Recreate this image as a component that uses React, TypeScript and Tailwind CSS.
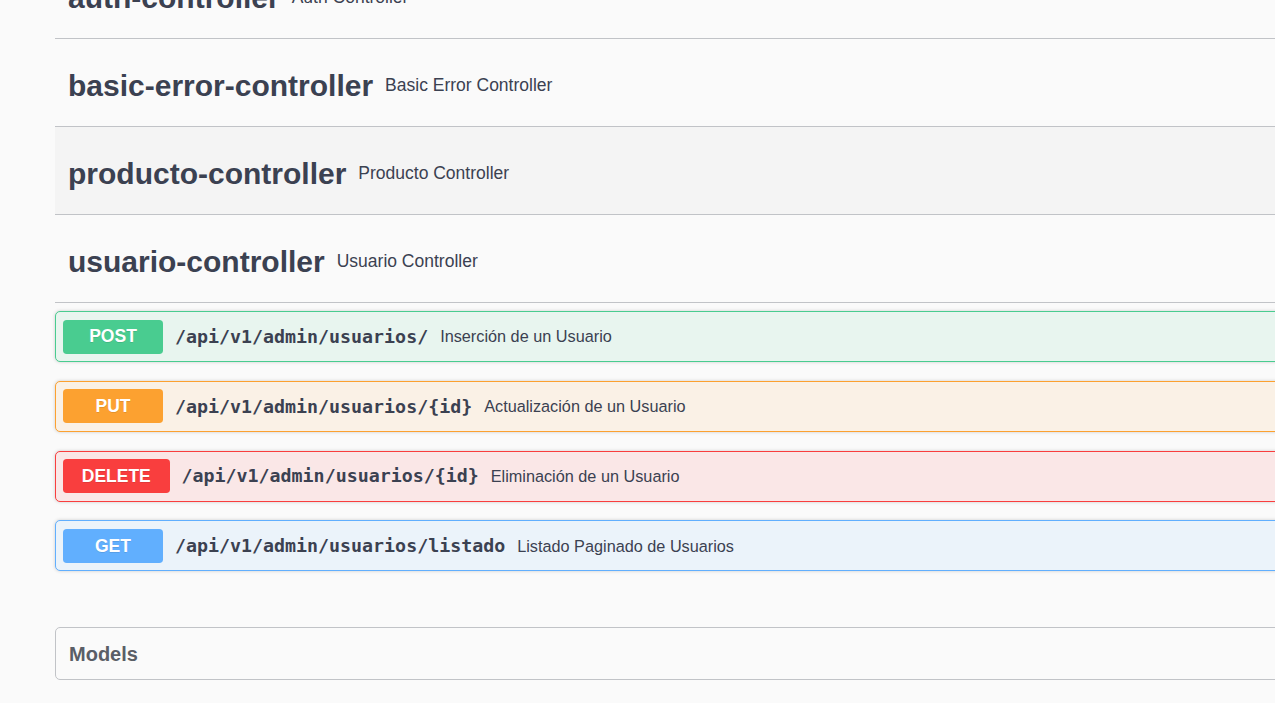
const tags = [
  { name: "auth-controller", desc: "Auth Controller", hover: false },
  { name: "basic-error-controller", desc: "Basic Error Controller", hover: false },
  { name: "producto-controller", desc: "Producto Controller", hover: true },
  { name: "usuario-controller", desc: "Usuario Controller", hover: false },
];

type Op = {
  method: string;
  path: string;
  summary: string;
  box: string;
  badge: string;
};

const ops: Op[] = [
  {
    method: "POST",
    path: "/api/v1/admin/usuarios/",
    summary: "Inserción de un Usuario",
    box: "border-[#49cc90] bg-[#e8f5ef]",
    badge: "bg-[#49cc90]",
  },
  {
    method: "PUT",
    path: "/api/v1/admin/usuarios/{id}",
    summary: "Actualización de un Usuario",
    box: "border-[#fca130] bg-[#faf1e6]",
    badge: "bg-[#fca130]",
  },
  {
    method: "DELETE",
    path: "/api/v1/admin/usuarios/{id}",
    summary: "Eliminación de un Usuario",
    box: "border-[#f93e3e] bg-[#fae7e7]",
    badge: "bg-[#f93e3e]",
  },
  {
    method: "GET",
    path: "/api/v1/admin/usuarios/listado",
    summary: "Listado Paginado de Usuarios",
    box: "border-[#61affe] bg-[#ebf3fa]",
    badge: "bg-[#61affe]",
  },
];

function TagHeader({ name, desc, hover }: { name: string; desc: string; hover: boolean }) {
  return (
    <h3
      className={`flex items-center h-[88px] pl-[13px] pt-[7px] border-b border-[#c1c3c7] text-[#3b4151] ${
        hover ? "bg-[#f4f4f4]" : ""
      }`}
    >
      <span className="text-[30px] font-bold leading-none">{name}</span>
      <small className="ml-[12px] text-[17.5px] font-normal leading-none">{desc}</small>
    </h3>
  );
}

function OpBlock({ op }: { op: Op }) {
  return (
    <div
      className={`mb-[18.75px] border rounded-[5px] shadow-[0_0_3.75px_rgba(0,0,0,0.19)] ${op.box}`}
    >
      <div className="flex items-center h-[49px] px-[7px]">
        <span
          className={`flex items-center justify-center h-[34px] min-w-[100px] px-[18.75px] rounded-[3.75px] text-white text-[17.5px] font-bold [text-shadow:0_1px_0_rgba(0,0,0,0.1)] ${op.badge}`}
        >
          {op.method}
        </span>
        <span className="px-[12px] text-[18.3px] font-bold text-[#3b4151] font-['DejaVu_Sans_Mono',monospace]">
          {op.path}
        </span>
        <span className="text-[16.25px] text-[#3b4151]">{op.summary}</span>
      </div>
    </div>
  );
}

export default function App() {
  return (
    <div className="w-full h-[703px] overflow-hidden bg-[#fafafa] font-['Liberation_Sans',Arial,sans-serif]">
      <div className="ml-[55px] w-[1300px] -mt-[49px]">
        {tags.map((t) => (
          <TagHeader key={t.name} {...t} />
        ))}
        <div className="pt-[8px]">
          {ops.map((op) => (
            <OpBlock key={op.method} op={op} />
          ))}
        </div>
        <section className="mt-[56px] border border-[#c1c3c7] rounded-[5px]">
          <h4 className="flex items-center h-[51px] pl-[13px] text-[20px] font-bold text-[#5a5e66]">
            Models
          </h4>
        </section>
      </div>
    </div>
  );
}
